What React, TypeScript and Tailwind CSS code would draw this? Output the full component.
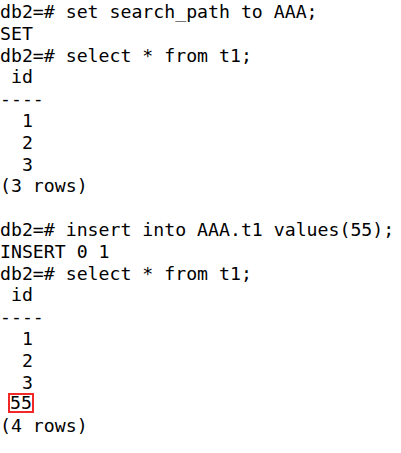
const lines: string[] = [
  "db2=# set search_path to AAA;",
  "SET",
  "db2=# select * from t1;",
  " id",
  "----",
  "  1",
  "  2",
  "  3",
  "(3 rows)",
  "",
  "db2=# insert into AAA.t1 values(55);",
  "INSERT 0 1",
  "db2=# select * from t1;",
  " id",
  "----",
  "  1",
  "  2",
  "  3",
];

export default function App() {
  return (
    <div className="w-[401px] h-[453px] bg-white text-black overflow-hidden">
      <pre className="font-['DejaVu_Sans_Mono',monospace] text-[18.2px] leading-[21.8px] pt-[1px] m-0 whitespace-pre">
        {lines.map((l, i) => (
          <div key={i} className="h-[21.8px]">{l}</div>
        ))}
        <div className="h-[21.8px] flex">
          <span className="w-[8px]" />
          <span className="border-2 border-[#f02828] h-[20px] w-[26px] flex items-center justify-center">55</span>
        </div>
        <div className="h-[21.8px]">(4 rows)</div>
      </pre>
    </div>
  );
}
